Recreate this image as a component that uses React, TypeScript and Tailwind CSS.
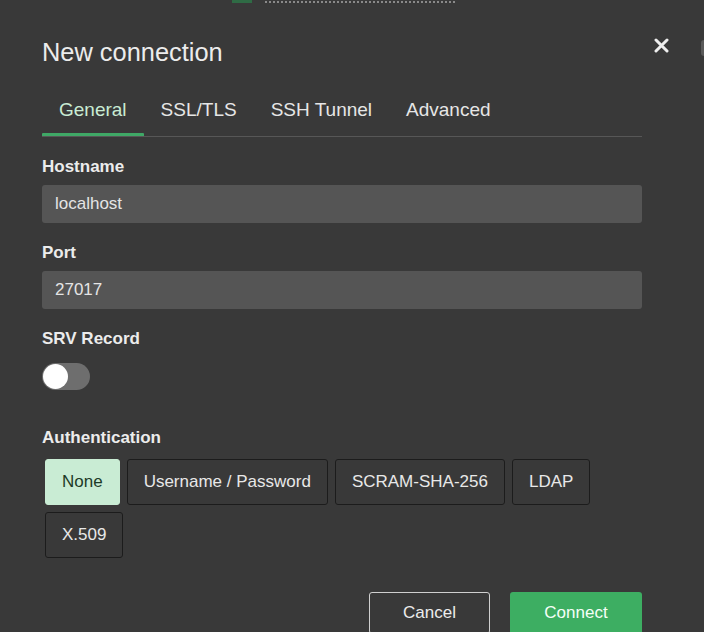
import React, { useState } from 'react'

const tabs = ['General', 'SSL/TLS', 'SSH Tunnel', 'Advanced']
const authModes = ['None', 'Username / Password', 'SCRAM-SHA-256', 'LDAP', 'X.509']

// Field label + dark text input
const Field = ({ label, value, top }: { label: string; value: string; top: string }) => (
  <div className={top}>
    <label className="block text-[17px] font-bold leading-[20px] text-[#ececec]">{label}</label>
    <div className="mt-[8px] flex h-[38px] w-full items-center rounded-[3px] bg-[#555555] px-[13px] text-[17px] text-[#e4e4e4]">
      {value}
    </div>
  </div>
)

export default function App() {
  const [activeTab] = useState('General')
  const [auth, setAuth] = useState('None')
  const [srv, setSrv] = useState(false)

  return (
    <div
      className="relative h-[632px] w-[704px] overflow-hidden bg-[#393939] px-[42px]"
      style={{ fontFamily: '"Liberation Sans", Arial, sans-serif' }}
    >
      {/* bottom edge of whatever sits behind the dialog */}
      <div className="flex h-[3px] items-start">
        <div className="ml-[190px] h-[3px] w-[20px] bg-[#2f6b45]" />
        <div className="ml-[13px] mt-[1px] h-[2px] w-[190px] border-t-2 border-dotted border-[#8a8a8a]" />
      </div>
      <div className="absolute right-0 top-[40px] h-[16px] w-[3px] rounded-l-sm bg-[#5a5a5a]" />

      {/* Header */}
      <div className="mt-[34px] flex w-[627px] items-start justify-between">
        <h1 className="text-[25.4px] leading-[30px] text-[#ececec]">New connection</h1>
        <button className="mt-[1px] text-[#eeeeee]" aria-label="Close">
          <svg width="15" height="15" viewBox="0 0 15 15">
            <path d="M2 2L13 13M13 2L2 13" stroke="currentColor" strokeWidth="3" strokeLinecap="round" />
          </svg>
        </button>
      </div>

      {/* Tabs */}
      <div className="mt-[31px] w-[600px] border-b border-[#575757]">
        <div className="flex">
          {tabs.map((t) => (
            <div key={t} className="flex flex-col">
              <span
                className={`px-[17px] text-[19px] leading-[24px] ${
                  t === activeTab ? 'text-[#c9ecd4]' : 'text-[#e6e6e6]'
                }`}
              >
                {t}
              </span>
              <div
                className={`mt-[11px] h-[3px] rounded-t-[1px] ${t === activeTab ? 'bg-[#3fa866]' : 'bg-transparent'}`}
              />
            </div>
          ))}
        </div>
      </div>

      <div className="w-[600px]">
        <Field label="Hostname" value="localhost" top="mt-[20px]" />
        <Field label="Port" value="27017" top="mt-[20px]" />

        <div className="mt-[20px]">
          <label className="block text-[17px] font-bold leading-[20px] text-[#ececec]">SRV Record</label>
          <button
            onClick={() => setSrv(!srv)}
            className={`mt-[14px] flex h-[27px] w-[48px] items-center rounded-full px-[1px] ${
              srv ? 'justify-end bg-[#3fa866]' : 'justify-start bg-[#6e6e6e]'
            }`}
          >
            <span className="h-[25px] w-[25px] rounded-full bg-white" />
          </button>
        </div>

        <div className="mt-[38px]">
          <label className="block text-[17px] font-bold leading-[20px] text-[#ececec]">Authentication</label>
          <div className="ml-[3px] mt-[11px] flex flex-wrap gap-[7px]">
            {authModes.map((m) => (
              <button
                key={m}
                onClick={() => setAuth(m)}
                className={`h-[46px] rounded-[3px] border px-[16px] text-[17px] ${
                  auth === m
                    ? 'border-[#c9ecd4] bg-[#c9ecd4] text-[#1d3b27]'
                    : 'border-[#1c1c1c] bg-transparent text-[#e8e8e8]'
                }`}
              >
                {m}
              </button>
            ))}
          </div>
        </div>

        {/* Footer */}
        <div className="mt-[34px] flex justify-end gap-[20px]">
          <button className="h-[42px] w-[121px] rounded-[3px] border border-[#d0d0d0] text-[17px] text-[#ececec]">
            Cancel
          </button>
          <button className="h-[42px] w-[132px] rounded-[3px] bg-[#3dae62] text-[17px] text-[#f4fff7]">
            Connect
          </button>
        </div>
      </div>
    </div>
  )
}
